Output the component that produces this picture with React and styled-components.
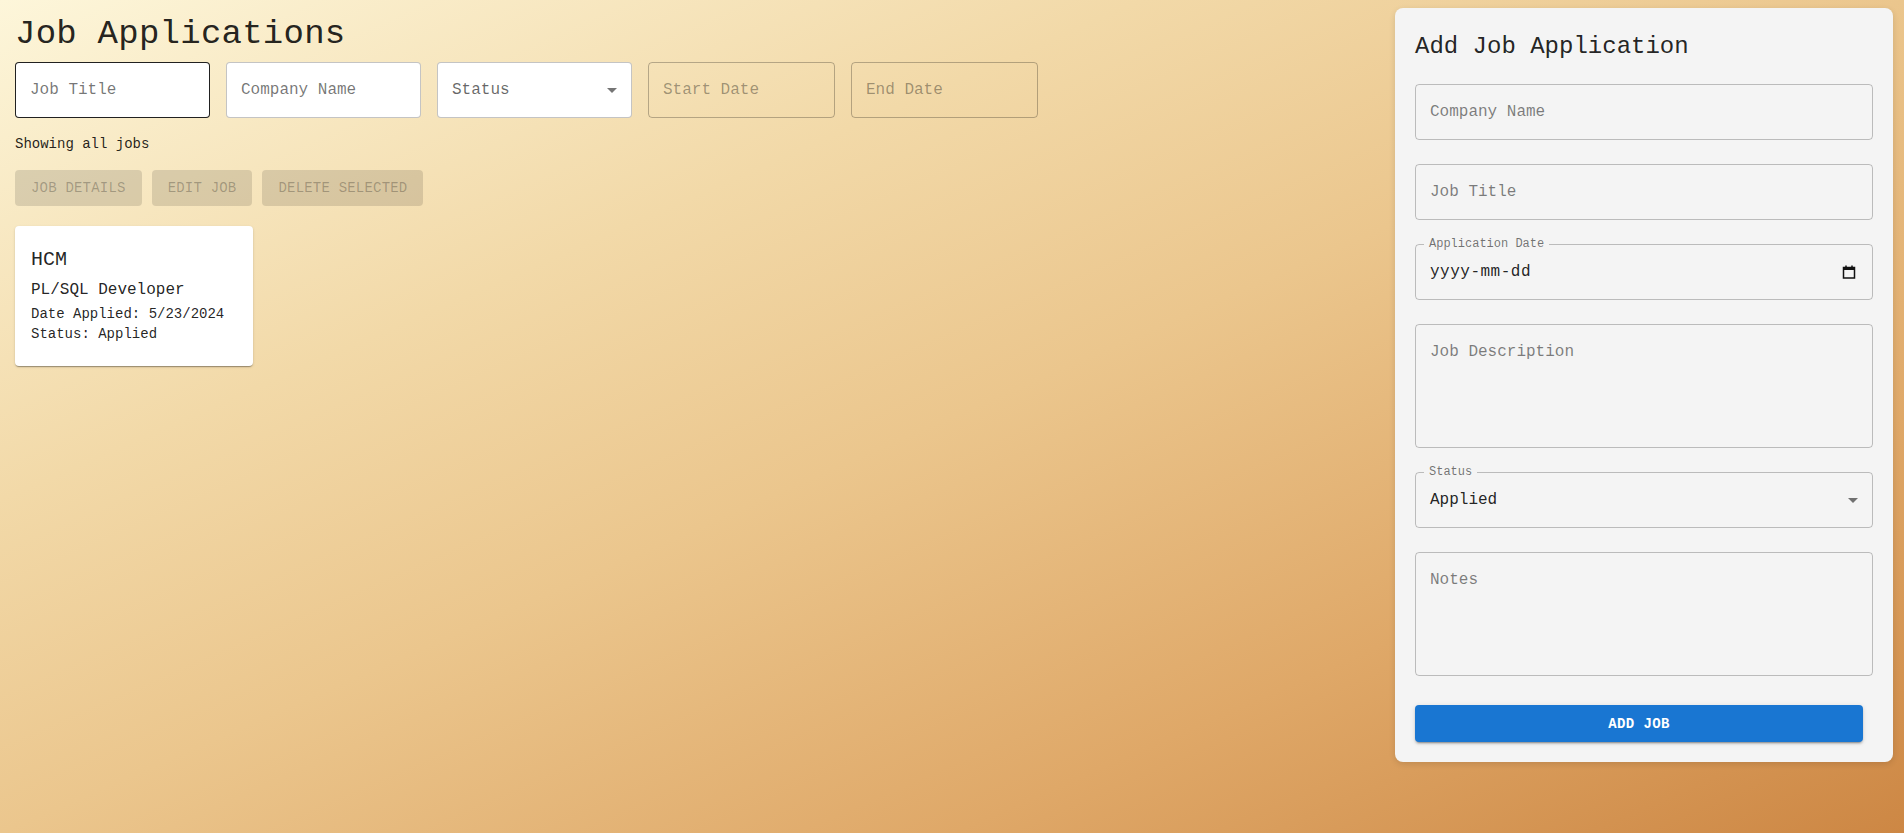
import styled, { createGlobalStyle } from 'styled-components'

const GlobalStyle = createGlobalStyle`
    html, body {
        margin: 0;
        padding: 0;
    }
    body {
        font-family: "Liberation Mono", "DejaVu Sans Mono", monospace;
        color: rgba(0, 0, 0, 0.87);
        background: linear-gradient(to bottom right, #fdf6da 0%, #f2d9a8 30%, #ebc68d 50%, #dfa868 75%, #cd8744 100%);
        min-height: 100vh;
    }
`

function ArrowDown() {
    return (
        <ArrowSvg viewBox="0 0 24 24">
            <path d="M7 10l5 5 5-5z" fill="currentColor" />
        </ArrowSvg>
    )
}

function CalendarIcon() {
    return (
        <svg width="14" height="14" viewBox="0 0 14 14">
            <rect x="1.5" y="2.5" width="11" height="10.5" fill="none" stroke="#111" strokeWidth="1.5" />
            <rect x="1.5" y="2.5" width="11" height="2.5" fill="#111" />
            <path d="M4 0.5v2.5M10 0.5v2.5" stroke="#111" strokeWidth="1.5" />
        </svg>
    )
}

function JobCard({ job }) {
    return (
        <Card>
            <CardTitle>{job.company}</CardTitle>
            <CardRole>{job.title}</CardRole>
            <CardMeta>Date Applied: {job.date}</CardMeta>
            <CardMeta>Status: {job.status}</CardMeta>
        </Card>
    )
}

function OutlinedField({ label, children, $tall }) {
    return (
        <Field $tall={$tall}>
            {label && <FloatLabel>{label}</FloatLabel>}
            {children}
        </Field>
    )
}

export default function App() {
    const jobs = [{ company: 'HCM', title: 'PL/SQL Developer', date: '5/23/2024', status: 'Applied' }]

    return (
        <>
            <GlobalStyle />
            <Page>
                <Main>
                    <Title>Job Applications</Title>
                    <FilterRow>
                        <FilterInput placeholder="Job Title" $hover />
                        <FilterInput placeholder="Company Name" />
                        <FilterSelect>
                            <span>Status</span>
                            <ArrowDown />
                        </FilterSelect>
                        <FilterInput placeholder="Start Date" $disabled disabled />
                        <FilterInput placeholder="End Date" $disabled disabled />
                    </FilterRow>
                    <Showing>Showing all jobs</Showing>
                    <ButtonRow>
                        <GhostButton disabled>Job Details</GhostButton>
                        <GhostButton disabled>Edit Job</GhostButton>
                        <GhostButton disabled>Delete Selected</GhostButton>
                    </ButtonRow>
                    <CardList>
                        {jobs.map((job) => (
                            <JobCard key={job.company} job={job} />
                        ))}
                    </CardList>
                </Main>

                <Panel>
                    <PanelTitle>Add Job Application</PanelTitle>
                    <FieldStack>
                        <OutlinedField>
                            <FieldInput placeholder="Company Name" />
                        </OutlinedField>
                        <OutlinedField>
                            <FieldInput placeholder="Job Title" />
                        </OutlinedField>
                        <OutlinedField label="Application Date">
                            <FieldValue $right={16}>
                                <DateText>yyyy-mm-dd</DateText>
                                <CalendarIcon />
                            </FieldValue>
                        </OutlinedField>
                        <OutlinedField $tall>
                            <FieldArea placeholder="Job Description" rows={4} />
                        </OutlinedField>
                        <OutlinedField label="Status">
                            <FieldValue $right={7}>
                                <span>Applied</span>
                                <ArrowDown />
                            </FieldValue>
                        </OutlinedField>
                        <OutlinedField $tall>
                            <FieldArea placeholder="Notes" rows={4} />
                        </OutlinedField>
                    </FieldStack>
                    <AddButton>Add Job</AddButton>
                </Panel>
            </Page>
        </>
    )
}

const Page = styled.div`
    display: flex;
    align-items: flex-start;
    gap: 24px;
    padding: 8px 11px 0 15px;
    min-height: 825px;
    box-sizing: border-box;
`

const Main = styled.main`
    flex: 1;
    min-width: 0;
`

const Title = styled.h1`
    font-size: 34px;
    font-weight: 400;
    line-height: 42px;
    letter-spacing: 0.25px;
    margin: 5px 0 7px;
`

const FilterRow = styled.div`
    display: flex;
    gap: 16px;
`

const FilterInput = styled.input`
    box-sizing: border-box;
    width: ${(p) => (p.$disabled ? '187px' : '195px')};
    height: 56px;
    padding: 0 14px;
    border-radius: 4px;
    border: 1px solid ${(p) => (p.$hover ? 'rgba(0,0,0,0.87)' : p.$disabled ? 'rgba(0,0,0,0.26)' : 'rgba(0,0,0,0.23)')};
    background: ${(p) => (p.$disabled ? 'transparent' : '#fff')};
    font-family: inherit;
    font-size: 16px;
    outline: none;
    &::placeholder {
        color: ${(p) => (p.$disabled ? 'rgba(0,0,0,0.36)' : 'rgba(0,0,0,0.55)')};
        opacity: 1;
    }
`

const FilterSelect = styled.div`
    box-sizing: border-box;
    width: 195px;
    height: 56px;
    padding: 0 7px 0 14px;
    border-radius: 4px;
    border: 1px solid rgba(0, 0, 0, 0.23);
    background: #fff;
    display: flex;
    align-items: center;
    justify-content: space-between;
    font-size: 16px;
    color: rgba(0, 0, 0, 0.6);
`

const ArrowSvg = styled.svg`
    width: 24px;
    height: 24px;
    color: rgba(0, 0, 0, 0.54);
    flex-shrink: 0;
`

const Showing = styled.p`
    font-size: 14px;
    line-height: 20px;
    margin: 16px 0;
`

const ButtonRow = styled.div`
    display: flex;
    gap: 10px;
`

const GhostButton = styled.button`
    height: 36px;
    padding: 0 16px;
    border: none;
    border-radius: 4px;
    background: rgba(0, 0, 0, 0.12);
    color: rgba(0, 0, 0, 0.26);
    font-family: inherit;
    font-size: 14px;
    letter-spacing: 0.2px;
    text-transform: uppercase;
`

const CardList = styled.div`
    display: flex;
    flex-wrap: wrap;
    gap: 16px;
    margin-top: 20px;
`

const Card = styled.div`
    width: 238px;
    box-sizing: border-box;
    padding: 18px 16px 22px;
    background: #fff;
    border-radius: 4px;
    box-shadow: 0px 2px 1px -1px rgba(0,0,0,0.2), 0px 1px 1px 0px rgba(0,0,0,0.14), 0px 1px 3px 0px rgba(0,0,0,0.12);
`

const CardTitle = styled.div`
    font-size: 20px;
    line-height: 32px;
    margin-bottom: 2px;
`

const CardRole = styled.div`
    font-size: 16px;
    line-height: 24px;
    margin-bottom: 2px;
`

const CardMeta = styled.div`
    font-size: 14px;
    line-height: 20px;
`

const Panel = styled.aside`
    width: 498px;
    flex-shrink: 0;
    box-sizing: border-box;
    padding: 20px;
    background: #f4f4f4;
    border-radius: 8px;
    box-shadow: 0 2px 6px rgba(0, 0, 0, 0.12);
`

const PanelTitle = styled.h2`
    font-size: 24px;
    font-weight: 400;
    line-height: 32px;
    margin: 3px 0 21px;
`

const FieldStack = styled.div`
    display: flex;
    flex-direction: column;
    gap: 24px;
`

const Field = styled.div`
    position: relative;
    box-sizing: border-box;
    height: ${(p) => (p.$tall ? '124px' : '56px')};
    border: 1px solid rgba(0, 0, 0, 0.23);
    border-radius: 4px;
    display: flex;
`

const FloatLabel = styled.span`
    position: absolute;
    top: -9px;
    left: 8px;
    padding: 0 5px;
    background: #f4f4f4;
    font-size: 12px;
    line-height: 16px;
    color: rgba(0, 0, 0, 0.55);
`

const FieldInput = styled.input`
    flex: 1;
    border: none;
    background: transparent;
    padding: 0 14px;
    font-family: inherit;
    font-size: 16px;
    outline: none;
    &::placeholder {
        color: rgba(0, 0, 0, 0.5);
        opacity: 1;
    }
`

const FieldArea = styled.textarea`
    flex: 1;
    border: none;
    background: transparent;
    resize: none;
    padding: 16px 14px;
    font-family: inherit;
    font-size: 16px;
    line-height: 23px;
    outline: none;
    &::placeholder {
        color: rgba(0, 0, 0, 0.5);
        opacity: 1;
    }
`

const FieldValue = styled.div`
    flex: 1;
    display: flex;
    align-items: center;
    justify-content: space-between;
    padding: 0 ${(p) => p.$right}px 0 14px;
    font-size: 16px;
    color: rgba(0, 0, 0, 0.87);
`

const DateText = styled.span`
    letter-spacing: 0.5px;
`

const AddButton = styled.button`
    display: block;
    width: calc(100% - 10px);
    height: 37px;
    margin-top: 29px;
    border: none;
    border-radius: 4px;
    background: #1976d2;
    color: #fff;
    font-family: inherit;
    font-size: 14px;
    font-weight: 700;
    letter-spacing: 0.4px;
    text-transform: uppercase;
    box-shadow: 0px 3px 1px -2px rgba(0,0,0,0.2), 0px 2px 2px 0px rgba(0,0,0,0.14), 0px 1px 5px 0px rgba(0,0,0,0.12);
`
